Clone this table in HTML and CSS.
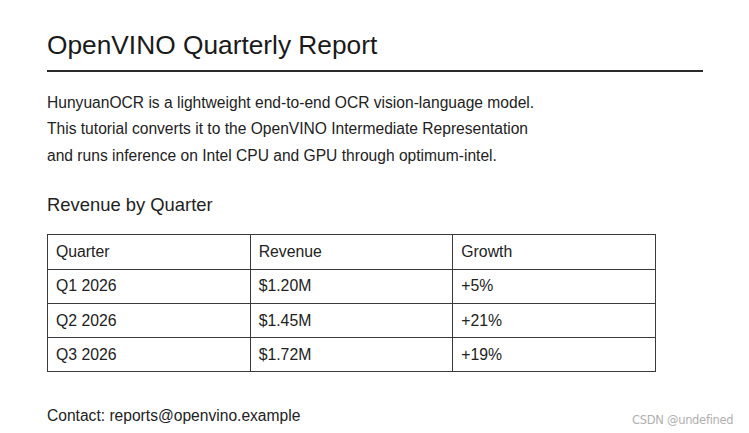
FILE: index.html
```html
<!DOCTYPE html>
<html lang="en">
<head>
<meta charset="utf-8">
<title>OpenVINO Quarterly Report</title>
<link rel="stylesheet" href="styles.css">
</head>
<body>
<main class="page">
  <h1 class="title">OpenVINO Quarterly Report</h1>
  <p class="intro">HunyuanOCR is a lightweight end-to-end OCR vision-language model.<br>This tutorial converts it to the OpenVINO Intermediate Representation<br>and runs inference on Intel CPU and GPU through optimum-intel.</p>
  <h2 class="section">Revenue by Quarter</h2>
  <table class="revenue">
    <thead>
      <tr><th>Quarter</th><th>Revenue</th><th>Growth</th></tr>
    </thead>
    <tbody>
      <tr><td>Q1 2026</td><td>$1.20M</td><td>+5%</td></tr>
      <tr><td>Q2 2026</td><td>$1.45M</td><td>+21%</td></tr>
      <tr><td>Q3 2026</td><td>$1.72M</td><td>+19%</td></tr>
    </tbody>
  </table>
  <p class="contact">Contact: reports@openvino.example</p>
</main>
<div class="watermark">CSDN @undefined</div>
</body>
</html>
```
FILE: styles.css
```css
html, body {
  margin: 0;
  padding: 0;
  background: #ffffff;
}
body {
  font-family: "Liberation Sans", Arial, sans-serif;
  color: #222222;
  width: 749px;
  height: 433px;
  overflow: hidden;
  position: relative;
}
.page {
  padding: 31px 0 0 47px;
  width: 656px;
}
.title {
  margin: 0;
  font-size: 26.3px;
  font-weight: normal;
  line-height: 29px;
  color: #1a1a1a;
  padding-bottom: 10px;
  border-bottom: 2px solid #2a2a2a;
}
.intro {
  margin: 17.5px 0 0 0;
  font-size: 15.6px;
  line-height: 26.67px;
}
.section {
  margin: 25.5px 0 0 0;
  font-size: 18.4px;
  font-weight: normal;
  line-height: 20.7px;
}
.revenue {
  margin-top: 18.5px;
  border-collapse: collapse;
  table-layout: fixed;
  width: 609px;
  font-size: 15.8px;
}
.revenue th,
.revenue td {
  width: 33.33%;
  border: 1px solid #3a3a3a;
  padding: 6.67px 8px;
  line-height: 20px;
  text-align: left;
  font-weight: normal;
}
.contact {
  margin: 34.5px 0 0 0;
  font-size: 15.6px;
  line-height: 18.4px;
}
.watermark {
  position: absolute;
  left: 632px;
  top: 413px;
  font-family: "DejaVu Sans", sans-serif;
  font-size: 11.5px;
  letter-spacing: -0.3px;
  color: #b0b0b0;
  line-height: 14px;
}
```
